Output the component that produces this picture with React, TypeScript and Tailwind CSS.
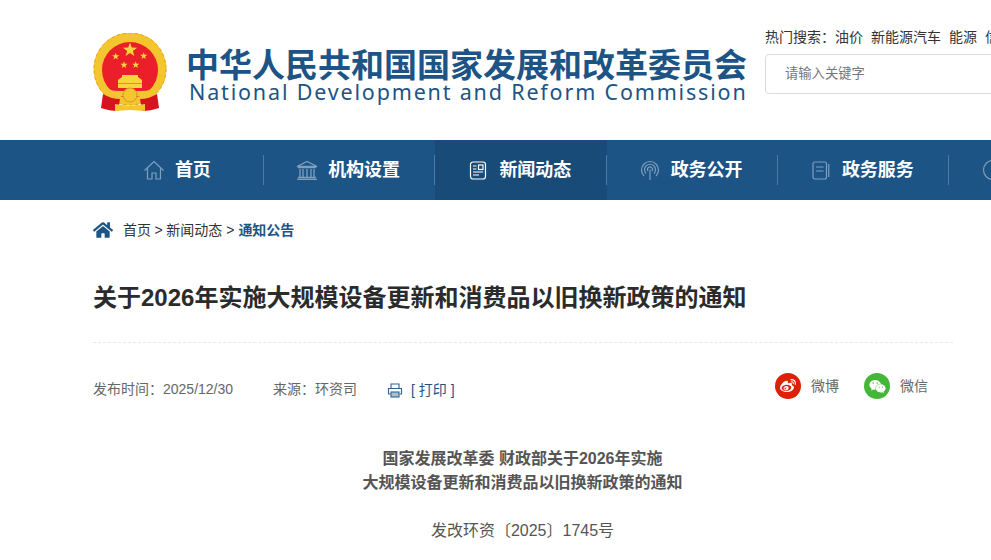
import React from "react";
import { FaWeibo, FaWeixin, FaHome } from "react-icons/fa";

const sans = "font-['Liberation_Sans','Noto_Sans_CJK_SC',sans-serif]";

const Star = ({ x, y, r }: { x: number; y: number; r: number }) => {
  const pts = Array.from({ length: 10 }, (_, i) => {
    const a = -Math.PI / 2 + (i * Math.PI) / 5;
    const d = i % 2 === 0 ? r : r * 0.4;
    return `${x + d * Math.cos(a)},${y + d * Math.sin(a)}`;
  }).join(" ");
  return <polygon fill="#f9d53c" points={pts} />;
};

const Emblem = () => (
  <svg width="75" height="80" viewBox="0 0 75 80">
    <circle cx="37" cy="36" r="36.5" fill="#f3c52f" />
    <circle cx="37" cy="36" r="36" fill="none" stroke="#e0a51c" strokeWidth="1" strokeDasharray="3 3" />
    <circle cx="37" cy="37" r="28" fill="#ea1f29" />
    <Star x={37} y={17} r={7.5} />
    <Star x={22.7} y={23.5} r={3.8} />
    <Star x={50.7} y={23} r={3.8} />
    <Star x={31} y={32} r={3.8} />
    <Star x={42.7} y={32} r={3.8} />
    <path fill="#f9d53c" d="M25 47l4-3v-2h16v2l4 3v8H25z" />
    <path fill="#d8991a" d="M25 50h24v1H25z" />
    <path fill="#f3c52f" d="M9 52c5 4 10 6 16 6h24c6 0 11-2 16-6l-2 8c-4 2-9 3-14 3H25c-5 0-10-1-14-3z" />
    <circle cx="37" cy="62" r="7" fill="#f3c52f" stroke="#d8991a" />
    <path fill="#d6141d" d="M10 61c5 3 11 5 17 5l-2 12c-6 0-11-1-17-3zM64 61c-5 3-11 5-17 5l2 12c6 0 11-1 17-3z" />
    <path fill="#f3c52f" d="M22 71l15 2 15-2v7l-15-1-15 1z" />
  </svg>
);

const icon = "fill-none stroke-current";

const navItems = [
  {
    label: "首页",
    svg: (
      <svg width="22" height="22" viewBox="0 0 22 22" className={`${icon} text-[#7f9fbd]`} strokeWidth="1.2">
        <path d="M1.5 11.5 11 2.5l9.5 9M4.5 9.5V20h4.5v-6h4v6h4.5V9.5" />
      </svg>
    ),
  },
  {
    label: "机构设置",
    svg: (
      <svg width="22" height="20" viewBox="0 0 22 20" className={`${icon} text-[#7f9fbd]`} strokeWidth="1.3">
        <path d="M1 6.5 11 1.5l10 5zM2 7.5h18M4 9v8M7 9v8M11 9v8M15 9v8M18 9v8M2 17.5h18M1 19.5h20" />
      </svg>
    ),
  },
  {
    label: "新闻动态",
    active: true,
    svg: (
      <svg width="18" height="19" viewBox="0 0 18 19" className={`${icon} text-white`} strokeWidth="1.2">
        <rect x="1.5" y="1" width="15" height="17" rx="2.5" />
        <path d="M4 5h3.5M4 8h3.5M4 11h10M4 14h6" />
        <rect x="9.5" y="4" width="4.5" height="4.5" />
      </svg>
    ),
  },
  {
    label: "政务公开",
    svg: (
      <svg width="20" height="20" viewBox="0 0 20 20" className={`${icon} text-[#7f9fbd]`} strokeWidth="1.2">
        <path d="M4 16A8.5 8.5 0 1 1 16 16M6 13.5a5.5 5.5 0 1 1 8 0M8 11a2.5 2.5 0 1 1 4 0M10 9.5V20" />
      </svg>
    ),
  },
  {
    label: "政务服务",
    svg: (
      <svg width="18" height="19" viewBox="0 0 18 19" className={`${icon} text-[#7f9fbd]`} strokeWidth="1.2">
        <rect x="1" y="1" width="13.5" height="17" rx="2" />
        <path d="M4 6h7.5M4 10h7.5M16.8 3v13" />
      </svg>
    ),
  },
];

const App = () => {
  return (
    <div className={`w-[991px] h-[560px] overflow-hidden bg-white ${sans}`}>
      <header className="h-[140px] flex pl-[93px] w-[1300px]">
        <div className="flex items-start pt-[33px]">
          <Emblem />
          <div className="ml-[18px] pt-[13px] w-[565px] font-['Noto_Sans_CJK_SC',sans-serif] text-[#1d5485]">
            <div className="text-[33px] leading-[34px] font-bold whitespace-nowrap">中华人民共和国国家发展和改革委员会</div>
            <div className="pl-[3px] text-[21.5px] leading-[24px] tracking-[1.83px] font-['Noto_Sans',sans-serif] whitespace-nowrap">
              National Development and Reform Commission
            </div>
          </div>
        </div>
        <div className="ml-[14px] pt-[29px]">
          <div className="text-[14px] leading-[16px] text-[#333] whitespace-nowrap flex gap-[8px]">
            <span className="-mr-[8px]">热门搜索：</span>
            <span>油价</span>
            <span>新能源汽车</span>
            <span>能源</span>
            <span>信息</span>
          </div>
          <div className="mt-[9px] w-[300px] h-[40px] border border-[#dcdcdc] rounded-[4px] pl-[19px] flex items-center text-[13.3px] text-[#777]">
            请输入关键字
          </div>
        </div>
      </header>

      <nav className="h-[60px] bg-[#1c5485] flex pl-[92.75px]">
        {navItems.map((item) => (
          <div
            key={item.label}
            className={`relative w-[171.25px] shrink-0 flex items-center justify-center gap-[10px] pr-[3px] ${item.active ? "bg-[#194b79]" : ""}`}
          >
            <span className="w-[22px] flex justify-center">{item.svg}</span>
            <span className="text-white font-bold text-[18px] whitespace-nowrap">{item.label}</span>
            <span className="absolute right-0 top-[15px] h-[30px] w-px bg-[#4f7aa2]" />
          </div>
        ))}
        <div className="pl-[33px] flex items-center">
          <svg width="22" height="22" viewBox="0 0 22 22" className={`${icon} text-[#7f9fbd]`} strokeWidth="1.2">
            <circle cx="11" cy="11" r="9.5" />
          </svg>
        </div>
      </nav>

      <main className="px-[93px] w-[951px] box-content">
        <div className="h-[60px] flex items-center text-[14px] text-[#333]">
          <FaHome className="text-[#1c5485] text-[20px] mr-[10px]" />
          <span>首页</span>
          <span className="mx-[3.5px]">&gt;</span>
          <span>新闻动态</span>
          <span className="mx-[4px]">&gt;</span>
          <span className="text-[#1c5485] font-bold">通知公告</span>
        </div>

        <h1 className="mt-[19px] text-[24px] leading-[38px] font-bold text-[#2b2b2b] whitespace-nowrap">
          关于2026年实施大规模设备更新和消费品以旧换新政策的通知
        </h1>

        <div className="w-[860px] mt-[25px] border-t border-dashed border-[#e8e8e8] flex justify-between">
          <div className="flex items-center pt-[35px] text-[14px] text-[#666]">
            <span>发布时间：2025/12/30</span>
            <span className="ml-[40px]">来源：环资司</span>
            <svg width="16" height="15" viewBox="0 0 16 15" className={`ml-[30px] mt-[2px] ${icon} text-[#2f6393]`} strokeWidth="1.1">
              <path d="M4 5V1h8v4M3.5 11H1.5V5.5h13V11h-2" />
              <rect x="4" y="9" width="8" height="5" fill="#a9bfd4" />
            </svg>
            <span className="ml-[8px] mt-[2px] text-[#1c5485]">[ 打印 ]</span>
          </div>
          <div className="flex items-center pt-[28px] pr-[25px] text-[14px] text-[#666]">
            <span className="w-[26px] h-[26px] rounded-full bg-[#dc2106] flex items-center justify-center">
              <FaWeibo className="text-white text-[16px]" />
            </span>
            <span className="ml-[10px]">微博</span>
            <span className="ml-[25px] w-[26px] h-[26px] rounded-full bg-[#44b638] flex items-center justify-center">
              <FaWeixin className="text-white text-[17px]" />
            </span>
            <span className="ml-[10px]">微信</span>
          </div>
        </div>

        <div className="w-[859px] mt-[46px] text-center text-[#555]">
          <p className="text-[16px] leading-[24px] font-bold">
            国家发展改革委 财政部关于2026年实施
            <br />
            大规模设备更新和消费品以旧换新政策的通知
          </p>
          <p className="mt-[20px] text-[16px] leading-[32px]">发改环资〔2025〕1745号</p>
        </div>
      </main>
    </div>
  );
};

export default App;
